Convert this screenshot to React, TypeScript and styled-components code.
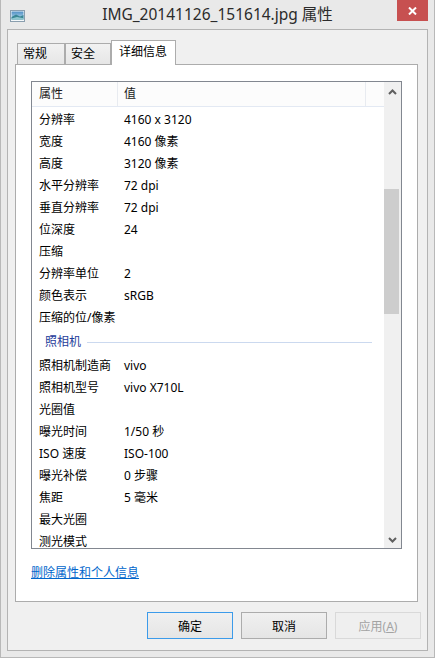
import React from "react";
import styled, { createGlobalStyle } from "styled-components";

const GlobalStyle = createGlobalStyle`
  html, body {
    margin: 0;
    padding: 0;
    background: #e9e9e9;
  }
  body {
    font-family: "Noto Sans", "Noto Sans CJK SC", sans-serif;
    -webkit-font-smoothing: antialiased;
  }
  * { box-sizing: border-box; }
`;

const Window = styled.div`
  width: 435px;
  height: 658px;
  display: flex;
  flex-direction: column;
  background: #e9e9e9;
  border: 1px solid #b8b8b8;
  border-top: 0;
  padding: 0 6px 6px 6px;
`;

const TitleBar = styled.div`
  height: 29px;
  flex: none;
  display: grid;
  grid-template-columns: 1fr auto 1fr;
  align-items: start;
`;

const TitleIcon = styled.svg`
  margin: 10px 0 0 3px;
  display: block;
`;

const TitleText = styled.div`
  font-size: 15.5px;
  line-height: 29px;
  color: #2b2b2b;
  white-space: nowrap;
`;

const CloseButton = styled.div`
  justify-self: end;
  width: 31px;
  height: 21px;
  background: #c75050;
  display: flex;
  align-items: center;
  justify-content: center;
`;

const Client = styled.div`
  flex: 1;
  display: flex;
  flex-direction: column;
  background: #f0f0f0;
  border: 1px solid #b3b3b3;
  padding: 0 9px 11px 7px;
`;

const TabStrip = styled.div`
  display: flex;
  align-items: flex-end;
  padding: 10px 0 0 2px;
  height: 34px;
  position: relative;
  z-index: 1;
`;

const Tab = styled.div<{ $active?: boolean; $w: number }>`
  width: ${(p) => p.$w}px;
  height: ${(p) => (p.$active ? 25 : 21)}px;
  margin-bottom: ${(p) => (p.$active ? -1 : 0)}px;
  border: 1px solid #acacac;
  border-bottom: 0;
  background: ${(p) =>
    p.$active ? "#ffffff" : "linear-gradient(#f2f2f2, #e6e6e6)"};
  font-size: 12px;
  color: #000;
  line-height: ${(p) => (p.$active ? 21 : 19)}px;
  padding-left: ${(p) => (p.$active ? 7 : 5)}px;
  white-space: nowrap;
  & + & {
    border-left: ${(p) => (p.$active ? "1px solid #acacac" : "0")};
  }
`;

const Panel = styled.div`
  height: 538px;
  flex: none;
  background: #ffffff;
  border: 1px solid #acacac;
  padding: 16px 15px 0 15px;
  display: flex;
  flex-direction: column;
`;

const ListView = styled.div`
  height: 468px;
  flex: none;
  border: 1px solid #828790;
  display: flex;
  background: #fff;
`;

const ListBody = styled.div`
  flex: 1;
  overflow: hidden;
  display: flex;
  flex-direction: column;
`;

const Header = styled.div`
  height: 25px;
  flex: none;
  display: flex;
  background: #fcfcfc;
  border-bottom: 1px solid #e3e9f3;
  margin-bottom: 1px;
`;

const HeaderCell = styled.div<{ $w?: number; $pad: number }>`
  width: ${(p) => (p.$w ? `${p.$w}px` : "auto")};
  flex: ${(p) => (p.$w ? "none" : "1")};
  height: 24px;
  line-height: 24px;
  font-size: 12px;
  color: #1a1a1a;
  padding-left: ${(p) => p.$pad}px;
  border-right: ${(p) => (p.$w ? "1px solid #e8ebf0" : "0")};
`;

const Row = styled.div`
  height: 22px;
  flex: none;
  display: flex;
  align-items: center;
  font-size: 12px;
  color: #000;
  white-space: nowrap;
`;

const LabelCell = styled.div`
  width: 86px;
  flex: none;
  padding-left: 7px;
  overflow: hidden;
`;

const ValueCell = styled.div`
  flex: 1;
  padding-left: 6px;
`;

const GroupRow = styled.div`
  height: 26px;
  flex: none;
  display: flex;
  align-items: center;
  padding: 0 12px 0 13px;
  font-size: 12px;
  color: #1e3c9a;
  white-space: nowrap;
`;

const GroupLine = styled.div`
  flex: 1;
  height: 1px;
  margin-left: 6px;
  margin-top: 2px;
  background: #cbd9ef;
`;

const ScrollBar = styled.div`
  width: 17px;
  flex: none;
  background: #f0f0f0;
  display: flex;
  flex-direction: column;
`;

const ScrollArrow = styled.div<{ $h: number }>`
  height: ${(p) => p.$h}px;
  flex: none;
  display: flex;
  align-items: center;
  justify-content: center;
`;

const Track = styled.div`
  flex: 1;
`;

const Thumb = styled.div`
  width: 15px;
  height: 125px;
  background: #cdcdcd;
`;

const Link = styled.a`
  display: block;
  margin-top: 15px;
  font-size: 12px;
  line-height: 17px;
  color: #0066cc;
  text-decoration: underline;
  align-self: flex-start;
  cursor: pointer;
`;

const Footer = styled.div`
  display: flex;
  justify-content: flex-end;
  gap: 8px;
  margin: 10px -3px 0 0;
`;

const Button = styled.button<{ $default?: boolean }>`
  width: 86px;
  height: 27px;
  padding: 0;
  font-family: inherit;
  font-size: 12px;
  color: #000;
  border: 1px solid ${(p) => (p.$default ? "#3c9bea" : "#acacac")};
  background: linear-gradient(#f0f0f0, #e5e5e5);
  border-radius: 0;
  &:disabled {
    color: #a3a3a3;
    border-color: #d9d9d9;
    background: #efefef;
  }
`;

type Entry =
  | { kind: "row"; label: string; value: string }
  | { kind: "group"; label: string };

const entries: Entry[] = [
  { kind: "row", label: "分辨率", value: "4160 x 3120" },
  { kind: "row", label: "宽度", value: "4160 像素" },
  { kind: "row", label: "高度", value: "3120 像素" },
  { kind: "row", label: "水平分辨率", value: "72 dpi" },
  { kind: "row", label: "垂直分辨率", value: "72 dpi" },
  { kind: "row", label: "位深度", value: "24" },
  { kind: "row", label: "压缩", value: "" },
  { kind: "row", label: "分辨率单位", value: "2" },
  { kind: "row", label: "颜色表示", value: "sRGB" },
  { kind: "row", label: "压缩的位/像素", value: "" },
  { kind: "group", label: "照相机" },
  { kind: "row", label: "照相机制造商", value: "vivo" },
  { kind: "row", label: "照相机型号", value: "vivo X710L" },
  { kind: "row", label: "光圈值", value: "" },
  { kind: "row", label: "曝光时间", value: "1/50 秒" },
  { kind: "row", label: "ISO 速度", value: "ISO-100" },
  { kind: "row", label: "曝光补偿", value: "0 步骤" },
  { kind: "row", label: "焦距", value: "5 毫米" },
  { kind: "row", label: "最大光圈", value: "" },
  { kind: "row", label: "测光模式", value: "" },
];

const Chevron = ({ up }: { up: boolean }) => (
  <svg width="9" height="6" viewBox="0 0 9 6">
    <path
      d={up ? "M1 5 L4.5 1.5 L8 5" : "M1 1 L4.5 4.5 L8 1"}
      fill="none"
      stroke="#5f5f5f"
      strokeWidth="2"
    />
  </svg>
);

export default function App() {
  return (
    <>
      <GlobalStyle />
      <Window>
        <TitleBar>
          <TitleIcon width="15" height="12" viewBox="0 0 15 12">
            <defs>
              <linearGradient id="sky" x1="0" y1="0" x2="0" y2="1">
                <stop offset="0" stopColor="#4f8fc4" />
                <stop offset="1" stopColor="#bfe1f2" />
              </linearGradient>
            </defs>
            <rect x="0.5" y="0.5" width="14" height="11" fill="#f4f8fa" stroke="#8a9eae" />
            <rect x="1.5" y="1.5" width="12" height="8" fill="url(#sky)" />
            <path d="M1.5 7 L6 4.5 L10 6.5 L13.5 5 L13.5 9.5 L1.5 9.5 Z" fill="#3a8795" />
            <path d="M1.5 8.5 L7 7 L13.5 8.3 L13.5 9.5 L1.5 9.5 Z" fill="#8fc7cf" />
          </TitleIcon>
          <TitleText>IMG_20141126_151614.jpg 属性</TitleText>
          <CloseButton>
            <svg width="9" height="8" viewBox="0 0 9 8">
              <path d="M1 0.5 L8 7.5 M8 0.5 L1 7.5" stroke="#fff" strokeWidth="2" />
            </svg>
          </CloseButton>
        </TitleBar>
        <Client>
          <TabStrip>
            <Tab $w={48}>常规</Tab>
            <Tab $w={46}>安全</Tab>
            <Tab $w={65} $active>
              详细信息
            </Tab>
          </TabStrip>
          <Panel>
            <ListView>
              <ListBody>
                <Header>
                  <HeaderCell $w={86} $pad={7}>
                    属性
                  </HeaderCell>
                  <HeaderCell $w={248} $pad={6}>
                    值
                  </HeaderCell>
                  <HeaderCell $pad={0} />
                </Header>
                {entries.map((e, i) =>
                  e.kind === "group" ? (
                    <GroupRow key={i}>
                      {e.label}
                      <GroupLine />
                    </GroupRow>
                  ) : (
                    <Row key={i}>
                      <LabelCell>{e.label}</LabelCell>
                      <ValueCell>{e.value}</ValueCell>
                    </Row>
                  )
                )}
              </ListBody>
              <ScrollBar>
                <ScrollArrow $h={20}>
                  <Chevron up />
                </ScrollArrow>
                <Track>
                  <Thumb style={{ marginTop: 87 }} />
                </Track>
                <ScrollArrow $h={17}>
                  <Chevron up={false} />
                </ScrollArrow>
              </ScrollBar>
            </ListView>
            <Link>删除属性和个人信息</Link>
          </Panel>
          <Footer>
            <Button $default>确定</Button>
            <Button>取消</Button>
            <Button disabled>
              应用(<u>A</u>)
            </Button>
          </Footer>
        </Client>
      </Window>
    </>
  );
}
